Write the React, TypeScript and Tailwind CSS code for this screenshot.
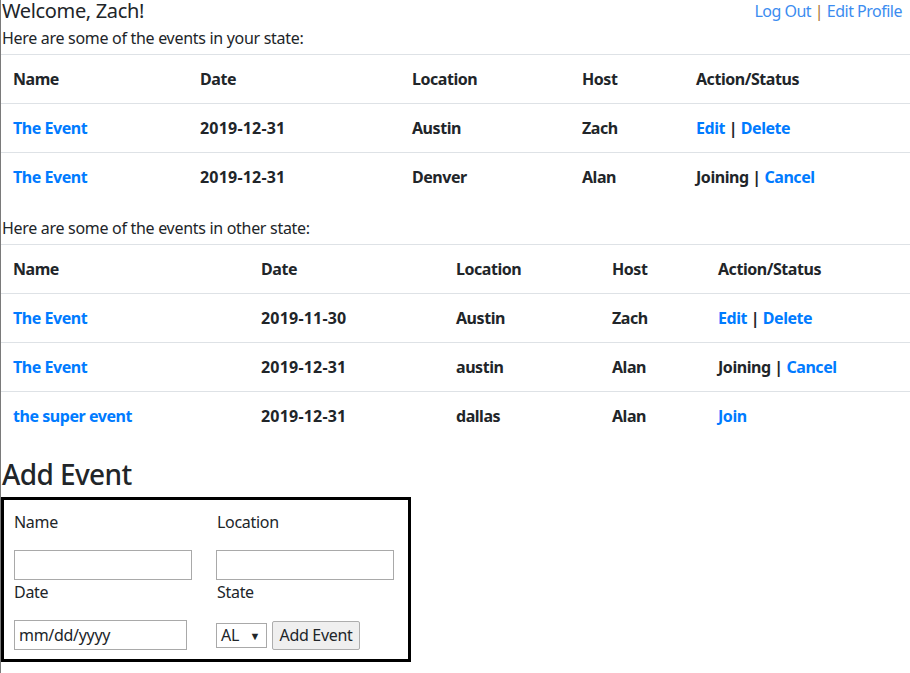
import React from "react";

const FONT = "font-['Noto_Sans','Open_Sans',sans-serif]";

function Action({ parts }: { parts: { text: string; link?: boolean }[] }) {
  return (
    <span>
      {parts.map((p, i) => (
        <span key={i} className={p.link ? "text-[#007bff]" : "text-[#212529]"}>
          {p.text}
        </span>
      ))}
    </span>
  );
}

type Row = {
  name: string;
  date: string;
  location: string;
  host: string;
  action: { text: string; link?: boolean }[];
};

function EventTable({ widths, rows }: { widths: number[]; rows: Row[] }) {
  const heads = ["Name", "Date", "Location", "Host", "Action/Status"];
  const cell =
    "border-t border-[#dee2e6] px-3 py-3 leading-6 text-[16px] font-bold tracking-[-0.45px] text-left align-top";
  return (
    <table className="w-[909px] table-fixed border-collapse">
      <colgroup>
        {widths.map((w, i) => (
          <col key={i} style={{ width: w }} />
        ))}
      </colgroup>
      <thead>
        <tr>
          {heads.map((h) => (
            <th key={h} className={cell + " text-[#212529]"}>
              {h}
            </th>
          ))}
        </tr>
      </thead>
      <tbody>
        {rows.map((r, i) => (
          <tr key={i}>
            <td className={cell + " text-[#007bff]"}>{r.name}</td>
            <td className={cell + " text-[#212529]"}>
              <span className="tracking-[0.2px]">{r.date}</span>
            </td>
            <td className={cell + " text-[#212529]"}>{r.location}</td>
            <td className={cell + " text-[#212529]"}>{r.host}</td>
            <td className={cell}>
              <Action parts={r.action} />
            </td>
          </tr>
        ))}
      </tbody>
    </table>
  );
}

const editDelete = [
  { text: "Edit", link: true },
  { text: " | " },
  { text: "Delete", link: true },
];
const joinCancel = [{ text: "Joining | " }, { text: "Cancel", link: true }];

export default function App() {
  return (
    <div
      className={`${FONT} w-[910px] h-[673px] overflow-hidden bg-white border-l border-[#7a7a7a] text-[#212529] tracking-[-0.3px]`}
    >
      <div className="flex justify-between items-start h-[22px]">
        <div className="text-[20px] leading-[22px] pl-[1px] tracking-[-0.35px]">Welcome, Zach!</div>
        <div className="text-[16px] leading-[22px] pr-[8px] text-[#3b8cf0] tracking-[-0.5px]">
          <span>Log Out</span>
          <span className="text-[#a8702a]"> | </span>
          <span>Edit Profile</span>
        </div>
      </div>
      <div className="mt-[4px] text-[16px] leading-6 pl-[1px]">Here are some of the events in your state:</div>
      <div className="mt-[4px]">
        <EventTable
          widths={[187, 212, 170, 114, 226]}
          rows={[
            { name: "The Event", date: "2019-12-31", location: "Austin", host: "Zach", action: editDelete },
            { name: "The Event", date: "2019-12-31", location: "Denver", host: "Alan", action: joinCancel },
          ]}
        />
      </div>
      <div className="mt-[15px] text-[16px] leading-6 pl-[1px]">Here are some of the events in other state:</div>
      <div className="mt-[4px]">
        <EventTable
          widths={[248, 195, 156, 106, 204]}
          rows={[
            { name: "The Event", date: "2019-11-30", location: "Austin", host: "Zach", action: editDelete },
            { name: "The Event", date: "2019-12-31", location: "austin", host: "Alan", action: joinCancel },
            {
              name: "the super event",
              date: "2019-12-31",
              location: "dallas",
              host: "Alan",
              action: [{ text: "Join", link: true }],
            },
          ]}
        />
      </div>
      <h2 className="mt-[15px] text-[28px] leading-[38px] font-medium pl-[1px] tracking-[-0.6px]">Add Event</h2>
      <div className="mt-[4px] w-[410px] h-[165px] border-[3px] border-black pl-[10px] pt-[10px]">
        <div className="grid grid-cols-[178px_178px] gap-x-6 text-[16px] leading-6">
          <div>Name</div>
          <div className="pl-[1px]">Location</div>
          <div className="mt-4 h-[30px] border border-[#a9a9a9] bg-white" />
          <div className="mt-4 h-[30px] border border-[#a9a9a9] bg-white" />
          <div>Date</div>
          <div className="pl-[1px]">State</div>
          <div className="mt-4 w-[173px] h-[30px] border border-[#a9a9a9] bg-white px-[4px] flex items-center">
            mm/dd/yyyy
          </div>
          <div className="mt-4 flex items-center gap-[5px]">
            <div className="w-[51px] h-[25px] border border-[#a9a9a9] bg-white flex items-center justify-between pl-[4px] pr-[6px]">
              <span>AL</span>
              <span className="text-[11px] leading-none">▼</span>
            </div>
            <div className="h-[29px] w-[88px] border border-[#adadad] rounded-[2px] bg-[#efefef] flex items-center justify-center">
              Add Event
            </div>
          </div>
        </div>
      </div>
    </div>
  );
}
